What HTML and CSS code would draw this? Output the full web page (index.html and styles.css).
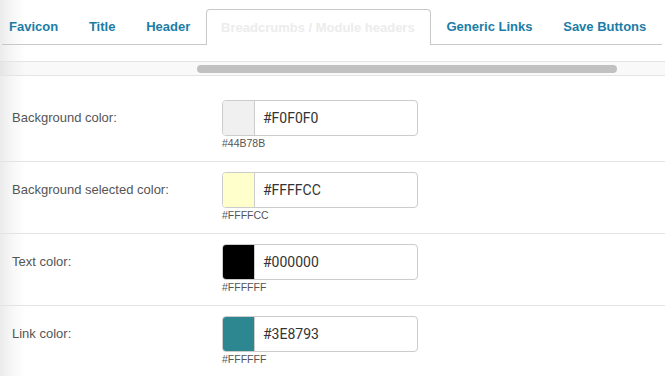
FILE: index.html
```html
<!DOCTYPE html>
<html>
<head>
<meta charset="utf-8">
<link rel="stylesheet" href="styles.css">
</head>
<body>
<div class="page">
  <ul class="tabs">
    <li class="tab first">Favicon</li>
    <li class="tab">Title</li>
    <li class="tab">Header</li>
    <li class="tab active">Breadcrumbs / Module headers</li>
    <li class="tab">Generic Links</li>
    <li class="tab">Save Buttons</li>
    <li class="tab-fill"></li>
  </ul>
  <div class="scroller"><div class="thumb"></div></div>
  <div class="rows">
    <div class="row">
      <div class="label">Background color:</div>
      <div class="field">
        <div class="input"><span class="swatch" style="background:#F0F0F0"></span><span class="value">#F0F0F0</span></div>
        <div class="hint">#44B78B</div>
      </div>
    </div>
    <div class="row">
      <div class="label">Background selected color:</div>
      <div class="field">
        <div class="input"><span class="swatch" style="background:#FFFFCC"></span><span class="value">#FFFFCC</span></div>
        <div class="hint">#FFFFCC</div>
      </div>
    </div>
    <div class="row">
      <div class="label">Text color:</div>
      <div class="field">
        <div class="input"><span class="swatch" style="background:#000000"></span><span class="value">#000000</span></div>
        <div class="hint">#FFFFFF</div>
      </div>
    </div>
    <div class="row">
      <div class="label">Link color:</div>
      <div class="field">
        <div class="input"><span class="swatch" style="background:#2d8790"></span><span class="value">#3E8793</span></div>
        <div class="hint">#FFFFFF</div>
      </div>
    </div>
  </div>
</div>
</body>
</html>
```
FILE: styles.css
```css
html, body {
  margin: 0;
  padding: 0;
}
body {
  width: 665px;
  height: 376px;
  overflow: hidden;
  background: linear-gradient(to right, #ebebeb 0px, #f7f7f7 12px, #ffffff 26px);
}
.page {
  padding-top: 9px;
}
.tabs {
  list-style: none;
  margin: 0;
  padding: 0 4px 0 2px;
  display: flex;
  height: 36px;
}
.tab {
  font-family: "Liberation Sans", Arial, sans-serif;
  font-weight: bold;
  font-size: 13px;
  color: #1b7da6;
  padding: 0 15.4px;
  height: 36px;
  line-height: 36px;
  box-sizing: border-box;
  border-bottom: 1px solid #c8c8c8;
  white-space: nowrap;
  flex: none;
}
.tab.first {
  padding-left: 7px;
}
.tab.active {
  color: #ececec;
  border: 1px solid #c8c8c8;
  border-bottom: none;
  border-radius: 4px 4px 0 0;
  line-height: 35px;
  padding: 0 15.4px 0 14.4px;
  background: #fff;
}
.tab-fill {
  flex: 1 1 auto;
  min-width: 0;
  border-bottom: 1px solid #c8c8c8;
  box-sizing: border-box;
  height: 36px;
}
.scroller {
  margin-top: 16px;
  height: 13px;
  border-top: 1px solid #e4e4e4;
  border-bottom: 1px solid #e4e4e4;
  background: rgba(0, 0, 0, 0.025);
  display: flex;
  align-items: center;
  padding-left: 197px;
}
.thumb {
  width: 420px;
  height: 8px;
  border-radius: 4px;
  background: #c1c1c1;
}
.rows {
  margin-top: 14px;
}
.row {
  display: flex;
  align-items: flex-start;
  padding: 10px 0 11px 12px;
  border-bottom: 1px solid #e4e4e4;
}
.label {
  width: 210px;
  height: 36px;
  line-height: 36px;
  font-family: "Liberation Sans", Arial, sans-serif;
  font-size: 13px;
  color: #555;
}
.field {
  display: flex;
  flex-direction: column;
}
.input {
  width: 196px;
  height: 36px;
  box-sizing: border-box;
  border: 1px solid #cccccc;
  border-radius: 4px;
  display: flex;
  overflow: hidden;
  background: #fff;
}
.swatch {
  width: 31px;
  border-right: 1px solid #cccccc;
  flex: none;
}
.value {
  padding-left: 8px;
  line-height: 34px;
  font-family: Roboto, "Liberation Sans", sans-serif;
  font-size: 14px;
  color: #333;
}
.hint {
  margin-top: 1px;
  height: 13px;
  line-height: 13px;
  font-family: "Liberation Sans", Arial, sans-serif;
  font-size: 10.5px;
  color: #555;
}
```
